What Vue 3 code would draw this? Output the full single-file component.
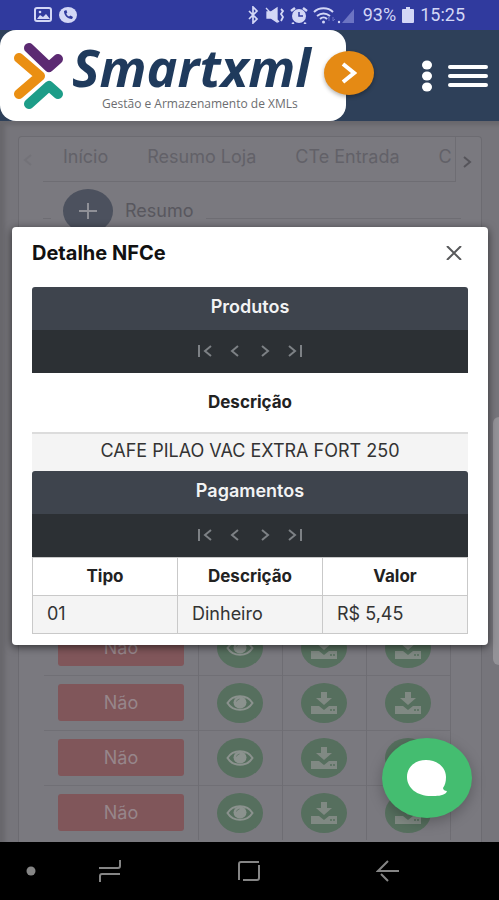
<script setup>
import { ref } from 'vue'

const tabs = ['Início', 'Resumo Loja', 'CTe Entrada', 'C']
const rows = [1, 2, 3, 4]
const open = ref(true)
const pagers = [
  { label: 'Primeira página', d: 'M2 2v12M14 3L8 8l6 5' },
  { label: 'Página anterior', d: 'M11 3L5 8l6 5' },
  { label: 'Próxima página', d: 'M5 3l6 5-6 5' },
  { label: 'Última página', d: 'M2 3l6 5-6 5M14 2v12' }
]
</script>

<template>
  <div class="screen">
    <div class="status">
      <svg class="st-left" width="46" height="18" viewBox="0 0 46 18">
        <rect x="1" y="2" width="16" height="13" rx="2" fill="none" stroke="#d3d7f6" stroke-width="2" />
        <path d="M3 13l3-4 3 2 3-3 4 5z" fill="#d3d7f6" />
        <circle cx="6" cy="6" r="1.3" fill="#d3d7f6" />
        <ellipse cx="34" cy="9" rx="9" ry="8" fill="#d3d7f6" />
        <path d="M30 5c0 4 3 8 8 8l1-2-2.500-1.500-1.500 1c-1.500-.7-2.300-1.700-2.700-3l1-1-1-2.500z" fill="#303a9e" />
      </svg>
      <svg class="st-right" width="110" height="18" viewBox="0 0 110 18">
        <path d="M2 5l8 8-4 4V1l4 4-8 8" fill="none" stroke="#d3d7f6" stroke-width="1.700" />
        <path d="M20 6h4l6-4v14l-6-4h-4zM19 2l13 14" fill="#d3d7f6" stroke="#d3d7f6" stroke-width="1.300" />
        <path d="M34 3l2 2-2 3 2 3-2 4" fill="none" stroke="#d3d7f6" stroke-width="1.800" />
        <ellipse cx="52" cy="10" rx="7" ry="7" fill="#d3d7f6" />
        <path d="M44 5l4-3M60 5l-4-3M47 17l-2 1M57 17l2 1" stroke="#d3d7f6" stroke-width="2.500" />
        <path d="M52 6v4h4" fill="none" stroke="#303a9e" stroke-width="1.500" />
        <path d="M67 6c5-5 14-5 19 0M70 10c4-3 9-3 13 0M73 13c2-2 5-2 7 0" fill="none" stroke="#d3d7f6" stroke-width="2" />
        <circle cx="76.500" cy="16" r="1.500" fill="#d3d7f6" />
        <path d="M82 15v-4M80 13l2-2M86 11v4M88 13l-2 2" stroke="#6a73c4" stroke-width="1" />
        <circle cx="92" cy="16" r="1.200" fill="#d3d7f6" />
        <path d="M107 3v14H95z" fill="#6c74c3" />
      </svg>
      <span class="battery">93%</span>
      <svg width="12" height="16" viewBox="0 0 12 16">
        <path d="M4 0h4v2h3q1 0 1 1v12q0 1-1 1H1q-1 0-1-1V3q0-1 1-1h3z" fill="#d3d7f6" />
      </svg>
      <span>15:25</span>
    </div>

    <header class="header">
      <div class="brand">
        <svg class="mark" width="50" height="66" viewBox="0 0 50 66" fill="none" stroke-width="10" stroke-linecap="round" stroke-linejoin="round">
          <path d="M15 5l20 19 9-8" stroke="#5c2a72" />
          <path d="M5 15l21 18L5 51" stroke="#ea8f12" />
          <path d="M15 61l20-18 9 8" stroke="#1d9d88" />
        </svg>
        <div class="names">
          <span class="name">Smartxml</span>
          <span class="tagline">Gestão e Armazenamento de XMLs</span>
        </div>
        <button class="expand" aria-label="Expandir">
          <svg width="16" height="22" viewBox="0 0 16 22"><path d="M2 2l11 9-11 9" fill="none" stroke="#fff" stroke-width="4" /></svg>
        </button>
      </div>
      <button class="plain" aria-label="Opções">
        <svg width="12" height="32" viewBox="0 0 12 32" fill="#fff">
          <ellipse cx="6" cy="5" rx="5" ry="4.500" /><ellipse cx="6" cy="16" rx="5" ry="4.500" /><ellipse cx="6" cy="27" rx="5" ry="4.500" />
        </svg>
      </button>
      <button class="plain" aria-label="Menu">
        <svg width="40" height="24" viewBox="0 0 40 24"><path d="M2 3h36M2 12h36M2 21h36" stroke="#fff" stroke-width="4" stroke-linecap="round" /></svg>
      </button>
    </header>

    <main class="main">
      <section class="page">
        <div>
          <nav class="tabs">
            <svg class="prev" width="10" height="14" viewBox="0 0 10 14"><path d="M8 2L2 7l6 5" fill="none" stroke="#737278" stroke-width="2" /></svg>
            <div class="tablist">
              <a v-for="t in tabs" :key="t" href="#">{{ t }}</a>
            </div>
            <svg class="next" width="10" height="14" viewBox="0 0 10 14"><path d="M2 2l6 5-6 5" fill="none" stroke="#55545a" stroke-width="2" /></svg>
          </nav>
          <div class="legend">
            <button class="plus" aria-label="Expandir resumo">
              <svg width="18" height="16" viewBox="0 0 18 16"><path d="M9 0v16M0 8h18" stroke="#8f9097" stroke-width="2" /></svg>
            </button>
            <span>Resumo</span>
          </div>
        </div>
        <table class="list">
          <colgroup><col class="wide"><col><col><col></colgroup>
          <tbody>
            <tr v-for="r in rows" :key="r">
              <td><button class="no">Não</button></td>
              <td>
                <button class="round" aria-label="Ver">
                  <svg width="28" height="18" viewBox="0 0 28 18">
                    <path d="M1.500 9C7 0 21 0 26.500 9 21 18 7 18 1.500 9z" fill="none" stroke="#8b928e" stroke-width="2" />
                    <ellipse cx="14" cy="8.500" rx="6.500" ry="6" fill="#8b928e" />
                    <path d="M10.500 7.500q.5-2 3-2.500" fill="none" stroke="#66796c" />
                  </svg>
                </button>
              </td>
              <td v-for="c in 2" :key="c">
                <button class="round" aria-label="Baixar">
                  <svg width="26" height="22" viewBox="0 0 26 22" fill="#808983">
                    <path d="M10 0h6v6h5l-8 7-8-7h5z" /><path d="M0 14h8l5 4 5-4h8v8H0z" /><path d="M19 18h2M22 18h2" stroke="#566f5e" stroke-width="1.500" />
                  </svg>
                </button>
              </td>
            </tr>
          </tbody>
        </table>
      </section>

      <div class="scroll"></div>

      <div v-if="open" class="overlay">
        <div class="dialog" role="dialog" aria-labelledby="dlg-title">
          <div class="dialog-head">
            <h2 id="dlg-title">Detalhe NFCe</h2>
            <button class="plain" aria-label="Fechar" @click="open = false">
              <svg width="16" height="14" viewBox="0 0 16 14"><path d="M1 0l14 14M15 0L1 14" stroke="#58595b" stroke-width="2" /></svg>
            </button>
          </div>

          <div class="caption">Produtos</div>
          <div class="pager">
            <button v-for="p in pagers" :key="p.label" class="plain" :aria-label="p.label">
              <svg width="16" height="16" viewBox="0 0 16 16"><path :d="p.d" fill="none" stroke="#7d8185" stroke-width="2" /></svg>
            </button>
          </div>
          <table class="products">
            <thead><tr><th>Descrição</th></tr></thead>
            <tbody><tr><td>CAFE PILAO VAC EXTRA FORT 250</td></tr></tbody>
          </table>

          <div class="caption">Pagamentos</div>
          <div class="pager">
            <button v-for="p in pagers" :key="p.label" class="plain" :aria-label="p.label">
              <svg width="16" height="16" viewBox="0 0 16 16"><path :d="p.d" fill="none" stroke="#7d8185" stroke-width="2" /></svg>
            </button>
          </div>
          <table class="payments">
            <thead><tr><th>Tipo</th><th>Descrição</th><th>Valor</th></tr></thead>
            <tbody><tr><td>01</td><td>Dinheiro</td><td>R$ 5,45</td></tr></tbody>
          </table>
        </div>
      </div>

      <button class="chat" aria-label="Chat">
        <svg width="42" height="38" viewBox="0 0 42 38">
          <path d="M20 1C9 1 1 8 1 18c0 11 10 19 24 19 6 0 11 0 15-3l1-2c-2 0-4-1-4-3 2-3 3-6 3-11C40 8 31 1 20 1z" fill="#fff" />
        </svg>
      </button>
    </main>

    <nav class="softkeys">
      <svg width="10" height="10" viewBox="0 0 10 10"><circle cx="5" cy="5" r="4.500" fill="#858585" /></svg>
      <div class="keys">
        <button class="plain" aria-label="Recentes">
          <svg width="24" height="24" viewBox="0 0 24 24" fill="none" stroke="#858585" stroke-width="2"><path d="M22 1v6q0 2-2 2H1M2 23v-6q0-2 2-2h18" /></svg>
        </button>
        <button class="plain" aria-label="Início">
          <svg width="24" height="22" viewBox="0 0 24 22" fill="none" stroke="#858585" stroke-width="2"><path d="M2 20V4q0-2 2-2h18M22 5v13q0 2-2 2H6" /></svg>
        </button>
        <button class="plain" aria-label="Voltar">
          <svg width="24" height="22" viewBox="0 0 24 22" fill="none" stroke="#858585" stroke-width="2"><path d="M23 11H2L12 1M5 14l7 7" /></svg>
        </button>
      </div>
    </nav>
  </div>
</template>

<style>
body { margin: 0; background: #000; }
</style>

<style scoped>
* { box-sizing: border-box; }
.screen {
  min-height: 100vh;
  display: flex;
  flex-direction: column;
  font-family: Inter, Roboto, sans-serif;
  font-size: 18px;
  line-height: 24px;
  color: #333;
}
button { font: inherit; border: 0; padding: 0; cursor: pointer; }
.plain { background: none; display: flex; }
svg { display: block; flex: none; }

.status {
  height: 30px;
  display: flex;
  align-items: center;
  gap: 6px;
  padding: 0 34px;
  background: #303a9e;
  color: #d3d7f6;
  font-family: Roboto, sans-serif;
  font-size: 18px;
}
.st-right { margin-left: auto; }

.header {
  position: relative;
  z-index: 2;
  display: flex;
  align-items: center;
  gap: 15px;
  padding-right: 11px;
  background: #2e4059;
}
.brand {
  position: relative;
  display: flex;
  align-items: center;
  gap: 8px;
  width: 71%;
  height: 91px;
  margin-right: auto;
  padding-left: 14px;
  background: #fff;
  border-radius: 16px;
}
.names { display: flex; flex-direction: column; font-family: "Open Sans", sans-serif; }
.name {
  font-size: 52px;
  line-height: 56px;
  font-weight: 700;
  font-style: italic;
  color: #1f3a5c;
}
.tagline { padding-left: 30px; font-size: 12px; line-height: 18px; color: #6c6d70; }
.expand {
  position: absolute;
  right: -28px;
  top: 21px;
  width: 50px;
  height: 44px;
  display: grid;
  place-items: center;
  background: #e58a14;
  border-radius: 50%;
  box-shadow: 0 2px 4px rgba(0, 0, 0, .3);
}

.main {
  position: relative;
  flex: 1;
  display: flex;
  padding: 15px 17px 0 18px;
  background: #76757b;
  overflow: hidden;
  box-shadow: inset 5px 4px 4px #68676c;
}
.page {
  flex: 1;
  display: flex;
  flex-direction: column;
  justify-content: space-between;
  border: 1px solid #6c6b71;
  border-bottom: 0;
  border-radius: 4px 4px 0 0;
  background: #7a797f;
}
.tabs { display: flex; align-items: center; padding-left: 4px; gap: 10px; color: #626168; }
.tablist {
  flex: 1;
  display: flex;
  gap: 39px;
  padding: 8px 0 12px 20px;
  border-bottom: 1px solid #6e6d73;
  border-right: 1px solid #6e6d73;
  overflow: hidden;
  white-space: nowrap;
}
.tablist a { color: inherit; text-decoration: none; }
.next { margin: 4px 9px 0 -4px; }
.legend {
  display: flex;
  align-items: center;
  gap: 12px;
  margin: 7px 20px 0 24px;
  color: #58575e;
}
.legend::before { content: ""; width: 8px; border-top: 1px solid #6e6d73; margin-top: 14px; }
.legend::after { content: ""; flex: 1; border-top: 1px solid #6e6d73; margin-top: 14px; }
.plus {
  width: 50px;
  height: 44px;
  display: grid;
  place-items: center;
  background: #4c515e;
  border-radius: 50%;
}

.list {
  width: auto;
  margin: 0 30px 2px 25px;
  table-layout: fixed;
  border-collapse: collapse;
}
.list .wide { width: 38%; }
.list td {
  height: 55px;
  padding: 0 14px;
  border-right: 1px solid #6e6d73;
  border-top: 1px solid #706f75;
}
.list td:not(:first-child) { padding: 0; }
.no {
  display: block;
  width: 100%;
  height: 37px;
  background: #80565a;
  color: #97868b;
  border-radius: 3px;
}
.round {
  width: 46px;
  height: 40px;
  margin: 0 auto;
  display: grid;
  place-items: center;
  background: #566f5e;
  border-radius: 50%;
}
.scroll {
  position: absolute;
  right: 0;
  top: 296px;
  width: 6px;
  height: 248px;
  background: #939297;
  border-radius: 6px 0 0 6px;
}

.overlay { position: absolute; inset: 0; padding: 106px 11px 0 12px; }
.dialog {
  padding: 0 20px 11px;
  background: #fff;
  border-radius: 4px;
  box-shadow: 0 2px 8px rgba(0, 0, 0, .6);
}
.dialog-head {
  display: flex;
  align-items: center;
  justify-content: space-between;
  height: 60px;
  padding: 0 6px 8px 0;
}
h2 { margin: 0; font-size: 20px; font-weight: 700; color: #111; }
.caption {
  padding: 8px 0 11px;
  line-height: 24px;
  text-align: center;
  font-weight: 600;
  color: #f2f3f4;
  background: #3e444d;
  border-radius: 3px 3px 0 0;
}
.pager {
  display: flex;
  justify-content: center;
  align-items: center;
  gap: 14px;
  height: 43px;
  padding-bottom: 2px;
  background: #2c3034;
}
table { width: 100%; border-collapse: collapse; }
th { font-size: 17px; font-weight: 700; color: #222; }
.products th { padding: 17px 0 18px; }
.products td {
  padding: 5px 0 8px;
  text-align: center;
  border-top: 2px solid #dcdcdc;
  background: #f4f4f4;
}
.payments { table-layout: fixed; }
.payments th, .payments td { border: 1px solid #c9c9c9; }
.payments th { padding: 6px 0 7px; }
.payments td { padding: 6px 14px 7px; background: #f4f4f4; }

.chat {
  position: absolute;
  right: 27px;
  bottom: 24px;
  width: 90px;
  height: 80px;
  display: grid;
  place-items: center;
  background: #44bd70;
  border-radius: 50%;
  box-shadow: 0 4px 14px rgba(0, 0, 0, .25);
}

.softkeys {
  height: 58px;
  display: flex;
  align-items: center;
  gap: 62px;
  padding: 0 99px 0 26px;
  background: #000;
}
.keys { flex: 1; display: flex; align-items: center; justify-content: space-between; }
</style>
